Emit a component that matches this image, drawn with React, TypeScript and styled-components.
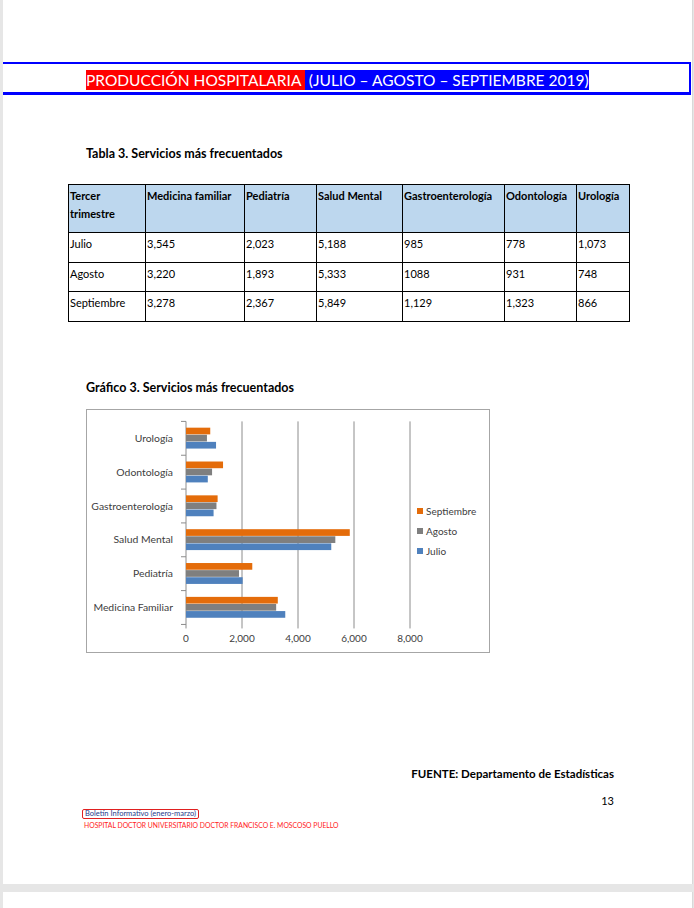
import React from 'react'
import styled, { createGlobalStyle } from 'styled-components'

const GlobalStyle = createGlobalStyle`
  body {
    margin: 0;
    background: #e6e6e6;
    font-family: Lato, "Open Sans", sans-serif;
  }
`

const Sheet = styled.div`
  width: 690px;
  height: 884px;
  margin-left: 3px;
  background: #ffffff;
  border-right: 1px solid #d9d9d9;
  box-sizing: border-box;
  display: flex;
  flex-direction: column;
`

const NextSheet = styled(Sheet)`
  height: 16px;
  margin-top: 8px;
`

const TitleBand = styled.header`
  margin-top: 62px;
  margin-right: 1px;
  border: solid #0000ff;
  border-width: 2px 2px 3px 0;
  display: flex;
  align-items: center;
  padding: 3px 0 0 83px;
  box-sizing: content-box;
  height: 25px;
`

const TitlePart = styled.span<{ $bg: string }>`
  background: ${p => p.$bg};
  color: #ffffff;
  font-size: 15.5px;
  line-height: 20px;
  white-space: pre;
`

const Caption = styled.h2<{ $top: number }>`
  margin: ${p => p.$top}px 0 0 83px;
  font-size: 12.5px;
  font-weight: 700;
  line-height: 16px;
  color: #000;
`

const DataTable = styled.table`
  margin: 22px 0 0 65px;
  width: 561px;
  border-collapse: collapse;
  table-layout: fixed;
  font-size: 11px;
  color: #000;

  th, td {
    border: 1px solid #000;
    padding: 2px 1px 0 1px;
    vertical-align: top;
    text-align: left;
    line-height: 18px;
  }
  th {
    background: #bdd7ee;
    font-weight: 700;
    height: 45px;
  }
  td {
    height: 26.5px;
  }
`

const ChartFrame = styled.div`
  margin: 13px 0 0 83px;
  width: 404px;
  height: 244px;
  border: 1px solid #a6a6a6;
  box-sizing: border-box;
  svg { display: block; }
`

const Footer = styled.footer`
  margin-top: 114px;
  display: flex;
  flex-direction: column;
`

const Source = styled.p`
  margin: 0 78px 0 0;
  align-self: flex-end;
  font-size: 11.5px;
  font-weight: 700;
  line-height: 14px;
`

const PageNumber = styled.p`
  margin: 13px 78px 0 0;
  align-self: flex-end;
  font-size: 11px;
  line-height: 14px;
`

const BulletinTag = styled.span`
  margin: 1px 0 0 79px;
  align-self: flex-start;
  border: 1px solid #e02020;
  border-radius: 2px;
  padding: 0 2px;
  font-size: 7.5px;
  line-height: 8px;
  color: #1f3b8c;
`

const HospitalLine = styled.span`
  margin: 2px 0 0 81px;
  font-size: 6.8px;
  line-height: 9px;
  color: #ff1a1a;
`

const rows = [
  { month: 'Julio', values: ['3,545', '2,023', '5,188', '985', '778', '1,073'] },
  { month: 'Agosto', values: ['3,220', '1,893', '5,333', '1088', '931', '748'] },
  { month: 'Septiembre', values: ['3,278', '2,367', '5,849', '1,129', '1,323', '866'] },
]

const headers = ['Medicina familiar', 'Pediatría', 'Salud Mental', 'Gastroenterología', 'Odontología', 'Urología']
const colWidths = [77, 99, 72, 86, 102, 72, 53]

// top to bottom, values: [Sep, Ago, Jul]
const chartData = [
  { label: 'Urología', values: [866, 748, 1073] },
  { label: 'Odontología', values: [1323, 931, 778] },
  { label: 'Gastroenterología', values: [1129, 1088, 985] },
  { label: 'Salud Mental', values: [5849, 5333, 5188] },
  { label: 'Pediatría', values: [2367, 1893, 2023] },
  { label: 'Medicina Familiar', values: [3278, 3220, 3545] },
]

const barColors = ['#e46c0a', '#7f7f7f', '#4f81bd']
const legend = [
  { name: 'Septiembre', color: barColors[0] },
  { name: 'Agosto', color: barColors[1] },
  { name: 'Julio', color: barColors[2] },
]

const BarChart: React.FC = () => {
  const x0 = 99
  const scale = 0.028
  const top = 11.4
  const band = 33.84
  const barH = 7.1
  const bottom = top + band * 6
  const ticks = [0, 2000, 4000, 6000, 8000]
  return (
    <svg width={402} height={242} fontFamily="Lato, sans-serif">
      {ticks.map(t => (
        <line key={t} x1={x0 + t * scale} x2={x0 + t * scale} y1={top} y2={bottom + 4} stroke="#8c8c8c" strokeWidth={1} />
      ))}
      {Array.from({ length: 7 }).map((_, i) => (
        <line key={i} x1={x0 - 5} x2={x0} y1={top + band * i} y2={top + band * i} stroke="#8c8c8c" strokeWidth={1} />
      ))}
      {chartData.map((c, i) => {
        const gy = top + band * i + (band - barH * 3) / 2
        return (
          <g key={c.label}>
            <text x={86} y={top + band * i + band / 2 + 3.5} fontSize={10.4} fill="#404040" textAnchor="end">{c.label}</text>
            {c.values.map((v, j) => (
              <rect key={j} x={x0} y={gy + j * barH} width={v * scale} height={barH - 0.4} fill={barColors[j]} />
            ))}
          </g>
        )
      })}
      {ticks.map(t => (
        <text key={t} x={x0 + t * scale} y={232} fontSize={10} fill="#404040" textAnchor="middle">{t.toLocaleString('en-US')}</text>
      ))}
      {legend.map((l, i) => (
        <g key={l.name}>
          <rect x={330} y={98 + i * 20} width={6} height={6} fill={l.color} />
          <text x={339} y={104.5 + i * 20} fontSize={10} fill="#404040">{l.name}</text>
        </g>
      ))}
    </svg>
  )
}

const App: React.FC = () => {
  return (
    <>
      <GlobalStyle />
      <Sheet>
        <TitleBand>
          <TitlePart $bg="#ff0000">PRODUCCIÓN HOSPITALARIA </TitlePart>
          <TitlePart $bg="#0000ff"> (JULIO – AGOSTO – SEPTIEMBRE 2019)</TitlePart>
        </TitleBand>

        <Caption $top={51}>Tabla 3. Servicios más frecuentados</Caption>

        <DataTable>
          <colgroup>
            {colWidths.map((w, i) => <col key={i} style={{ width: w }} />)}
          </colgroup>
          <thead>
            <tr>
              <th>Tercer trimestre</th>
              {headers.map(h => <th key={h}>{h}</th>)}
            </tr>
          </thead>
          <tbody>
            {rows.map(r => (
              <tr key={r.month}>
                <td>{r.month}</td>
                {r.values.map((v, i) => <td key={i}>{v}</td>)}
              </tr>
            ))}
          </tbody>
        </DataTable>

        <Caption $top={58}>Gráfico 3. Servicios más frecuentados</Caption>

        <ChartFrame>
          <BarChart />
        </ChartFrame>

        <Footer>
          <Source>FUENTE: Departamento de Estadísticas</Source>
          <PageNumber>13</PageNumber>
          <BulletinTag>Boletín Informativo (enero-marzo)</BulletinTag>
          <HospitalLine>HOSPITAL DOCTOR UNIVERSITARIO DOCTOR FRANCISCO E. MOSCOSO PUELLO</HospitalLine>
        </Footer>
      </Sheet>
      <NextSheet />
    </>
  )
}

export default App
